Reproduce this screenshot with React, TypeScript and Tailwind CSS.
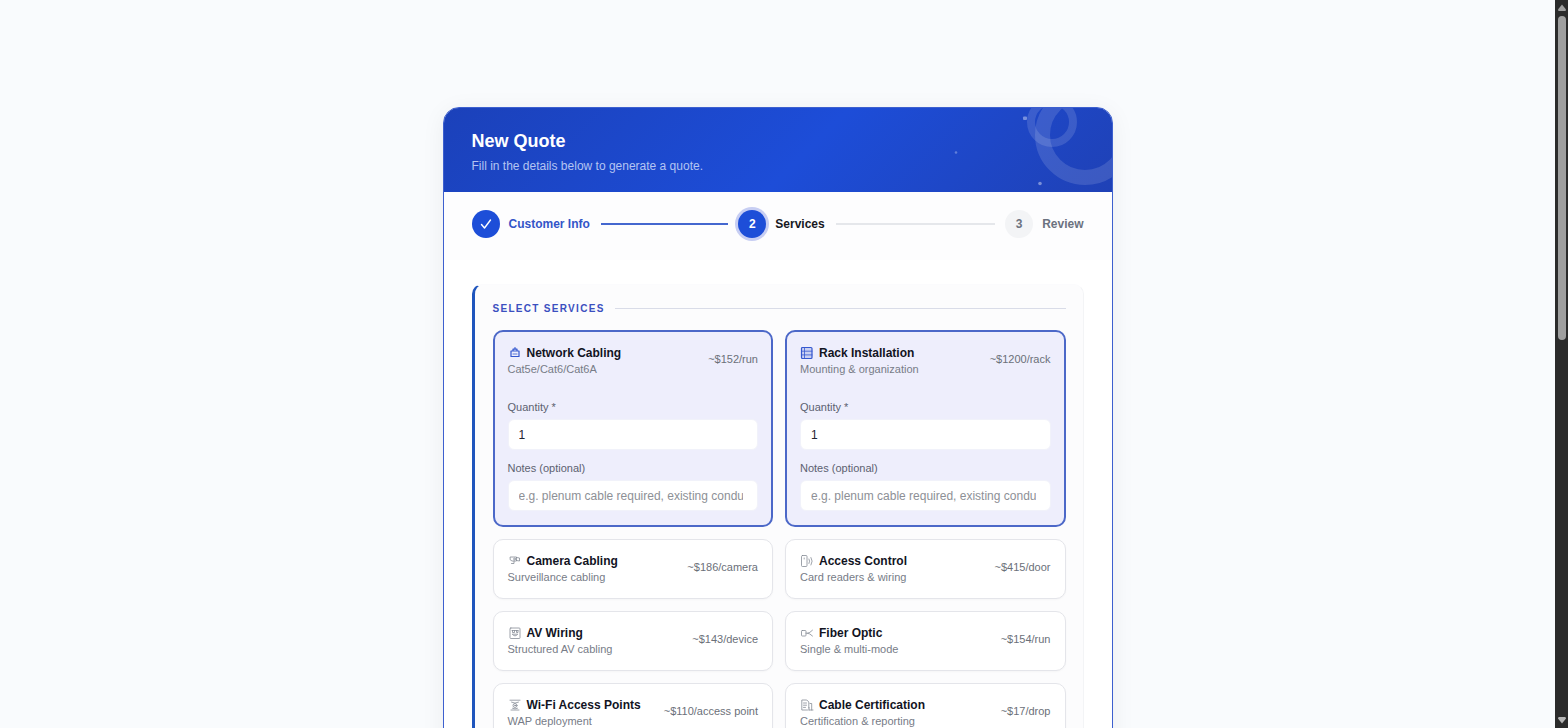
import React, { useState } from "react";

type IconName = "network" | "rack" | "camera" | "access" | "av" | "fiber" | "wifi" | "cert";

interface Service {
  id: IconName;
  name: string;
  description: string;
  price: string;
  selected?: boolean;
}

const services: Service[] = [
  { id: "network", name: "Network Cabling", description: "Cat5e/Cat6/Cat6A", price: "~$152/run", selected: true },
  { id: "rack", name: "Rack Installation", description: "Mounting & organization", price: "~$1200/rack", selected: true },
  { id: "camera", name: "Camera Cabling", description: "Surveillance cabling", price: "~$186/camera" },
  { id: "access", name: "Access Control", description: "Card readers & wiring", price: "~$415/door" },
  { id: "av", name: "AV Wiring", description: "Structured AV cabling", price: "~$143/device" },
  { id: "fiber", name: "Fiber Optic", description: "Single & multi-mode", price: "~$154/run" },
  { id: "wifi", name: "Wi-Fi Access Points", description: "WAP deployment", price: "~$110/access point" },
  { id: "cert", name: "Cable Certification", description: "Certification & reporting", price: "~$17/drop" },
];

const drawings: Record<IconName, React.ReactNode> = {
  network: (
    <>
      <path d="M3 5h8v5.500h-8zM5 5V3.200h4V5M7 3.200V1.500" strokeWidth="1.200" />
      <path d="M5 8h4" />
    </>
  ),
  rack: (
    <>
      <rect x="1.500" y="1.500" width="10.500" height="11" rx="1" fill="currentColor" fillOpacity="0.2" strokeWidth="1.200" />
      <path d="M1.500 5.200h10.500M1.500 8.900h10.500M4.500 1.500v11" />
    </>
  ),
  camera: (
    <>
      <path d="M2.500 3h6v4h-4.500L2.500 6zM8.500 3.500l3 .5v3l-3-.5M6 7v2.500H3.500" />
      <circle cx="6.500" cy="5" r="0.900" />
    </>
  ),
  access: (
    <>
      <rect x="1.500" y="1.500" width="5.500" height="11" rx="1" />
      <path d="M9 5q1.300 2.200 0 4.500M11 3.500q2.400 3.500 0 7.500M4.200 4v1" />
    </>
  ),
  av: (
    <>
      <rect x="2" y="2" width="10" height="10.500" rx="0.800" />
      <path d="M4.500 4.500v2h2v-2M8.500 4.500v2h1.500v-2M4.500 8.500q2.500 3 5 0zM4 4.500h6" />
    </>
  ),
  fiber: (
    <>
      <rect x="1.500" y="4.500" width="4.500" height="5.500" rx="0.800" />
      <path d="M6 7.200H7.500q2 0 5-3M7.500 7.200q2 0 5 2.800" />
    </>
  ),
  wifi: (
    <>
      <path d="M2 2.200h10M3.500 4.200q3.500 2 7 0M3 12h8M4.500 10.300q2.500 1.300 5 0" />
      <circle cx="7" cy="7.500" r="2" />
      <circle cx="7" cy="7.500" r="0.500" />
    </>
  ),
  cert: (
    <>
      <path d="M7.500 12H1.800V2h5l2 2v6M3.500 5h3M3.500 7.200h3M3.500 9.400h2" />
      <path d="M10 5.500h1.700V12M9 12V9.500M9 12h4" />
    </>
  ),
};

function ServiceIcon({ name, active }: { name: IconName; active?: boolean }) {
  return (
    <svg
      viewBox="0 0 14 14"
      aria-hidden="true"
      fill="none"
      stroke="currentColor"
      strokeWidth="0.800"
      strokeLinecap="round"
      strokeLinejoin="round"
      className={active ? "size-3.5 shrink-0 text-[#3558cf]" : "size-3.5 shrink-0 text-[#858b96]"}
    >
      {drawings[name]}
    </svg>
  );
}

function ServiceCard({ service }: { service: Service }) {
  const [quantity, setQuantity] = useState("1");
  const { id, name, description, price, selected } = service;
  const inputClass =
    "block h-[31px] w-full rounded-md border border-[#f1f2fa] bg-white pr-3.5 pl-2.5 text-xs text-[#1f2430] outline-none placeholder:text-[#8d9096]";
  return (
    <div
      className={
        selected
          ? "rounded-[10px] border-2 border-[#4c68c8] bg-[#eeeefc] px-[13px] pt-[13px] pb-3.5"
          : "rounded-[10px] border border-[#e4e5ea] bg-white px-3.5 py-[13px] shadow-[0_1px_2px_rgba(15,23,42,0.03)]"
      }
    >
      <button type="button" aria-pressed={!!selected} className="flex w-full items-center justify-between text-left">
        <span className="block">
          <span className="flex h-4 items-center gap-[5px] text-xs leading-4 font-bold text-[#12141f]">
            <ServiceIcon name={id} active={selected} />
            {name}
          </span>
          <span className="block text-[11px] leading-4 text-[#777c87]">{description}</span>
        </span>
        <span className="pb-1 text-[11px] leading-4 text-[#6b7079]">{price}</span>
      </button>
      {selected && (
        <div className="mt-[23px] flex flex-col gap-[11px]">
          <div>
            <label htmlFor={`${id}-quantity`} className="mb-[5px] block text-[11px] leading-[14px] text-[#5c6170]">
              Quantity *
            </label>
            <input
              id={`${id}-quantity`}
              type="number"
              min={1}
              value={quantity}
              onChange={(e) => setQuantity(e.target.value)}
              className={inputClass}
            />
          </div>
          <div>
            <label htmlFor={`${id}-notes`} className="mb-[5px] block text-[11px] leading-[14px] text-[#5c6170]">
              Notes (optional)
            </label>
            <input
              id={`${id}-notes`}
              type="text"
              placeholder="e.g. plenum cable required, existing conduit"
              className={inputClass}
            />
          </div>
        </div>
      )}
    </div>
  );
}

function Header() {
  return (
    <header className="relative overflow-hidden bg-[linear-gradient(135deg,#1b41ba_0%,#1d4dd8_54%,#1f41b6_100%)] px-7 pt-[22px] pb-4">
      <svg aria-hidden="true" viewBox="0 0 160 84" fill="none" className="absolute top-0 right-0 h-[84px] w-40">
        <g stroke="#fff">
          <circle cx="133" cy="27" r="42.500" strokeWidth="15" strokeOpacity="0.13" />
          <circle cx="100" cy="14" r="21" strokeWidth="8" strokeOpacity="0.13" />
        </g>
        <g fill="#fff">
          <rect x="71" y="8.500" width="4" height="3.500" rx="1" fillOpacity="0.4" />
          <circle cx="4" cy="44.500" r="1.300" fillOpacity="0.3" />
          <circle cx="88" cy="75.500" r="1.800" fillOpacity="0.4" />
        </g>
      </svg>
      <h1 className="text-lg leading-[22px] font-bold text-white">New Quote</h1>
      <p className="mt-[5px] text-xs leading-[19px] text-[#b4c4f2]">Fill in the details below to generate a quote.</p>
    </header>
  );
}

function Stepper() {
  return (
    <ol className="flex items-center bg-[#fdfdfe] px-7 pt-[18px] pb-[22px] text-xs leading-4 font-bold">
      <li className="flex flex-1 items-center">
        <span className="flex size-7 shrink-0 items-center justify-center rounded-full bg-[#1d4ed8] text-white">
          <svg viewBox="0 0 14 14" aria-label="Done" fill="none" stroke="currentColor" strokeWidth="1.400" strokeLinecap="round" strokeLinejoin="round" className="size-3.5">
            <path d="M2.500 7.500l3 3.500L11.500 3" />
          </svg>
        </span>
        <span className="ml-[9px] text-[#3355c8]">Customer Info</span>
        <span className="mr-2.5 ml-[11px] h-0.5 flex-1 bg-[#4467cf]" />
      </li>
      <li aria-current="step" className="flex flex-1 items-center">
        <span className="flex size-7 shrink-0 items-center justify-center rounded-full bg-[#1d4ed8] text-white shadow-[0_0_0_3px_#c7cef3]">
          2
        </span>
        <span className="ml-[9px] text-[#16181f]">Services</span>
        <span className="mr-2.5 ml-[11px] h-0.5 flex-1 bg-[#e5e7eb]" />
      </li>
      <li className="flex items-center">
        <span className="flex size-7 shrink-0 items-center justify-center rounded-full bg-[#f3f4f6] text-[#6b7280]">3</span>
        <span className="ml-[9px] text-[#6b7280]">Review</span>
      </li>
    </ol>
  );
}

function Scrollbar() {
  return (
    <div aria-hidden="true" className="flex w-[13px] shrink-0 flex-col items-center justify-between bg-[#2b2b2b] py-1">
      <div className="flex min-h-0 flex-1 flex-col items-center gap-[5px]">
        <svg viewBox="0 0 8 7" className="h-[7px] w-2 shrink-0" fill="#9f9f9f">
          <path d="M4 0.500L8 5.500Q8 7 7 7H1Q0 7 0 5.500z" />
        </svg>
        <div className="h-[45.5%] w-2 rounded-full bg-[#9f9f9f]" />
      </div>
      <svg viewBox="0 0 8 7" className="h-[7px] w-2 shrink-0" fill="#b5b5b5">
        <path d="M4 6.500L8 1.500Q8 0 7 0H1Q0 0 0 1.500z" />
      </svg>
    </div>
  );
}

export default function App() {
  return (
    <div className="flex h-screen overflow-hidden bg-[#f9fbfd] font-['Liberation_Sans',Arial,sans-serif]">
      <main className="min-w-0 flex-1 overflow-hidden px-4 pt-[107px]">
        <div className="mx-auto max-w-[670px] overflow-hidden rounded-2xl border border-[#3d60cf] bg-white shadow-[0_4px_24px_rgba(15,23,42,0.06)]">
          <Header />
          <Stepper />
          <form className="px-7 pt-6 pb-7" onSubmit={(e) => e.preventDefault()}>
            <section
              aria-labelledby="services-title"
              className="rounded-[10px] border border-l-[3px] border-[#f3f4f6] border-t-[#fbfbfd] border-l-[#1f55bd] bg-[#fcfcfd] pt-4 pr-[17px] pb-5 pl-[18px]"
            >
              <div className="mb-3.5 flex items-center gap-2.5">
                <h2 id="services-title" className="text-[10px] leading-[15px] font-bold tracking-[1.3px] text-[#3b4fc0] uppercase">
                  Select Services
                </h2>
                <span className="h-px flex-1 bg-[#d9dce8]" />
              </div>
              <div className="grid grid-cols-2 gap-3">
                {services.map((s) => (
                  <ServiceCard key={s.id} service={s} />
                ))}
              </div>
            </section>
          </form>
        </div>
      </main>
      <Scrollbar />
    </div>
  );
}
